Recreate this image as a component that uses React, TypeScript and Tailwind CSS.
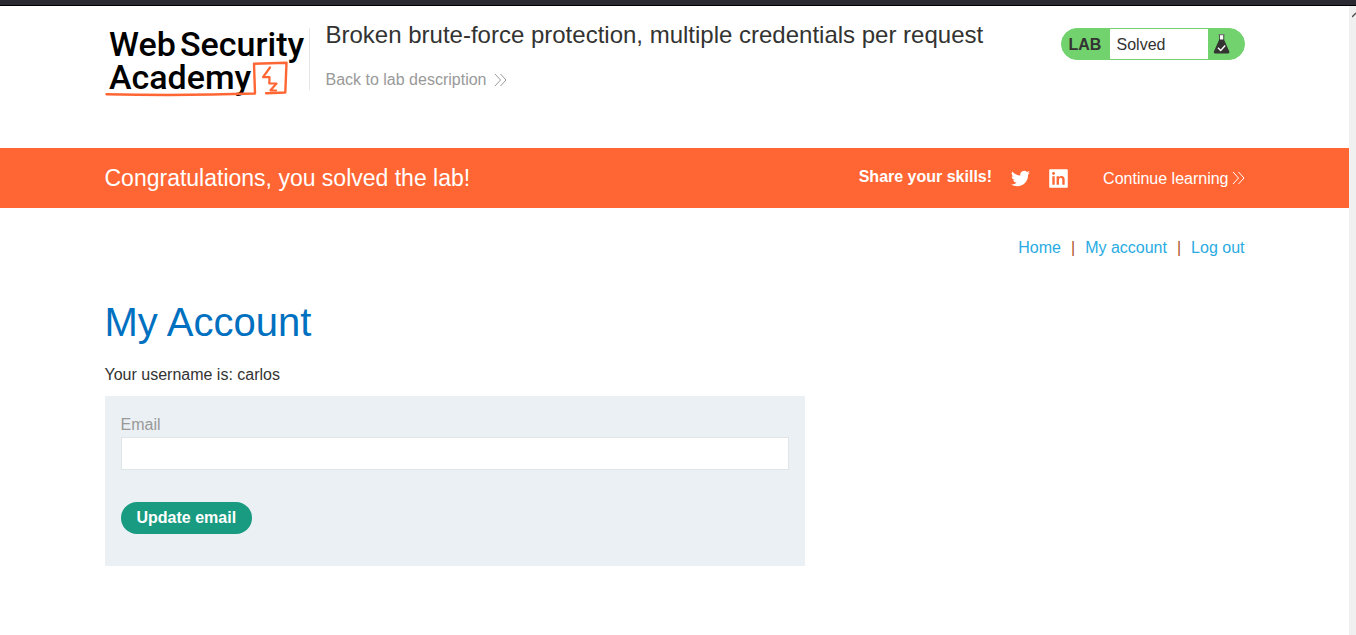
import React from "react";

function Logo() {
  return (
    <svg width="200" height="72" viewBox="0 0 200 72" role="img" aria-label="Web Security Academy" className="shrink-0 overflow-visible">
      <g fill="#000" fontFamily="Roboto, 'Liberation Sans', sans-serif" fontWeight="500" fontSize="34">
        <text x="4" y="28">Web</text>
        <text x="75" y="28">Security</text>
        <text x="4" y="61">Academy</text>
      </g>
      <g fill="#ff6633" stroke="#ff6633" strokeLinejoin="round" strokeLinecap="round">
        <path d="M1.500 66.200Q75 68 150 65.500L149 35.800L181.500 34.700L180.300 64.500L161 65.300" fill="none" strokeWidth="2.400" />
        <path d="M165 39.500L158 49.200L164.500 49L164.300 55.500L171.500 55.500L165.500 62.300L171 62.500" fill="none" strokeWidth="2.200" />
      </g>
    </svg>
  );
}

function Chevrons() {
  return (
    <svg width="13" height="14" viewBox="0 0 13 14" fill="none" stroke="currentColor" strokeWidth="1" aria-hidden="true">
      <path d="M1 1l5.500 6L1 13M6.500 1l5.500 6-5.500 6" />
    </svg>
  );
}

function Flask() {
  return (
    <svg width="18" height="22" viewBox="0 0 18 22" aria-hidden="true">
      <path d="M6.500 2h4v5h-4z" fill="#fff" />
      <path d="M5.500 1h6v1.200h-6z" fill="#777" />
      <path d="M6 2h.8v4.500h3.600V2h.8v5L16.300 18.500q.6 2-1.300 2H2.200q-1.900 0-1.300-2L6 7z" fill="#333332" />
      <path d="M5 14.800l2.700 2.700 4.500-5" fill="none" stroke="#fff" strokeWidth="1.400" />
    </svg>
  );
}

function Twitter() {
  return (
    <svg width="19" height="19" viewBox="0 0 24 24" fill="currentColor" aria-hidden="true">
      <path d="M23.950 4.570a10 10 0 0 1-2.820.77 4.960 4.960 0 0 0 2.160-2.720c-.95.55-2 .96-3.130 1.180a4.920 4.920 0 0 0-8.380 4.480C7.690 8.100 4.070 6.130 1.640 3.160a4.900 4.900 0 0 0 1.520 6.570 4.900 4.900 0 0 1-2.230-.61v.06a4.920 4.920 0 0 0 3.950 4.830 5 5 0 0 1-2.210.08 4.940 4.940 0 0 0 4.600 3.420A9.870 9.870 0 0 1 0 19.540a14 14 0 0 0 7.550 2.210c9.050 0 14-7.500 14-13.980 0-.21 0-.42-.02-.63a9.940 9.940 0 0 0 2.420-2.570z" />
    </svg>
  );
}

function LinkedIn() {
  return (
    <svg width="19" height="19" viewBox="0 0 20 20" aria-hidden="true">
      <path d="M1 1h18v18H1z" fill="#fff" stroke="#fff" strokeWidth="1.500" strokeLinejoin="round" />
      <path d="M3.500 7.500h2.500v9H3.500zM8 7.500h2.500v1.300c1.300-2.200 6-2 6 2.200v5.500H14v-5c0-3-3.500-2.800-3.500 0v5H8z" fill="#ff6633" />
      <circle cx="4.750" cy="4.700" r="1.500" fill="#ff6633" />
    </svg>
  );
}

export default function App() {
  return (
    <div className="flex min-h-screen flex-col bg-white font-['Liberation_Sans',Arial,sans-serif] text-base leading-5 text-[#333332]">
      <div className="h-1.5 border-b border-black bg-[#2b2a33]" />
      <div className="flex grow">
        <div className="min-w-0 grow">
          <header className="mx-auto flex h-[142px] max-w-[1140px] items-start pt-[22px]">
            <a href="#home">
              <Logo />
            </a>
            <div className="ml-1 flex h-[62px] flex-col justify-between border-l border-[#e6e6e6] pl-4">
              <h2 className="-mt-[7px] text-2xl leading-7">Broken brute-force protection, multiple credentials per request</h2>
              <a href="#description" className="flex items-center gap-2 text-[#999999]">
                Back to lab description
                <Chevrons />
              </a>
            </div>
            <div className="ml-auto flex h-8 items-center overflow-hidden rounded-full border border-[#71d26e] bg-[#71d26e]">
              <span className="w-12 pt-0.5 pl-[7px] font-bold">LAB</span>
              <p className="flex h-full w-[98px] items-center bg-white pt-0.5 pl-[7px]">Solved</p>
              <span className="w-9 pl-[5px]">
                <Flask />
              </span>
            </div>
          </header>

          <section className="bg-[#ff6633] text-white">
            <div className="mx-auto flex h-[60px] max-w-[1140px] items-center">
              <h4 className="grow text-[23px] leading-7">Congratulations, you solved the lab!</h4>
              <span className="mr-[19px] pb-0.5 font-bold">Share your skills!</span>
              <a href="#twitter" aria-label="Twitter" className="mr-[19px]">
                <Twitter />
              </a>
              <a href="#linkedin" aria-label="LinkedIn" className="mr-[35px]">
                <LinkedIn />
              </a>
              <a href="#learning" className="flex items-center gap-[3px]">
                <span className="pt-0.5">Continue learning</span>
                <Chevrons />
              </a>
            </div>
          </section>

          <main className="mx-auto max-w-[1140px] pt-[30px]">
            <nav className="flex justify-end gap-2.5 text-[#29abe2]">
              <a href="#home">Home</a>
              <span className="text-[#b0561f]">|</span>
              <a href="#account">My account</a>
              <span className="text-[#b0561f]">|</span>
              <a href="#logout">Log out</a>
            </nav>
            <h1 className="mt-10 text-[40px] leading-[48px] text-[#0070c0]">My Account</h1>
            <p className="mt-[19px]">Your username is: carlos</p>
            <form className="mt-[11px] max-w-[700px] bg-[#eaf0f3] px-4 pt-[19px] pb-8" onSubmit={(e) => e.preventDefault()}>
              <label htmlFor="email" className="block text-[#999999]">
                Email
              </label>
              <input
                id="email"
                type="email"
                className="mt-0.5 block h-[33px] w-full border border-[#e0e5e8] bg-white px-2 outline-none"
              />
              <button type="submit" className="mt-8 block h-8 rounded-full bg-[#189b80] px-4 font-bold text-white">
                Update email
              </button>
            </form>
          </main>
        </div>
        <div className="flex w-[7px] shrink-0 justify-end overflow-hidden bg-[#f0f0f0] pt-1.5" aria-hidden="true">
          <svg width="4" height="6" viewBox="0 0 4 6" fill="none" stroke="#505050" strokeWidth="1.500">
            <path d="M0 5l4-4" />
          </svg>
        </div>
      </div>
    </div>
  );
}
